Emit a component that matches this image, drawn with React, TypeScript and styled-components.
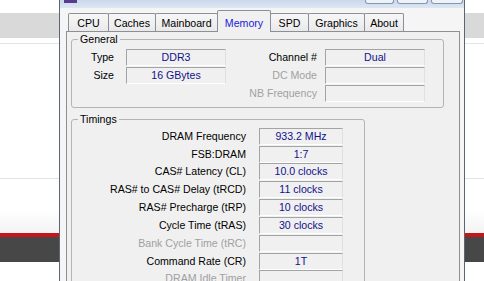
import styled, { createGlobalStyle } from 'styled-components';

const GlobalStyle = createGlobalStyle`
  html, body {
    margin: 0;
    padding: 0;
  }
  body {
    width: 484px;
    height: 281px;
    overflow: hidden;
    background: #fff;
    font-family: "Liberation Sans", Arial, sans-serif;
    font-size: 10.6px;
  }
`;

type Timing = { label: string, value: string, dim?: boolean };

const timings: Timing[] = [
  { label: 'DRAM Frequency', value: '933.2 MHz' },
  { label: 'FSB:DRAM', value: '1:7' },
  { label: 'CAS# Latency (CL)', value: '10.0 clocks' },
  { label: 'RAS# to CAS# Delay (tRCD)', value: '11 clocks' },
  { label: 'RAS# Precharge (tRP)', value: '10 clocks' },
  { label: 'Cycle Time (tRAS)', value: '30 clocks' },
  { label: 'Bank Cycle Time (tRC)', value: '', dim: true },
  { label: 'Command Rate (CR)', value: '1T' },
  { label: 'DRAM Idle Timer', value: '', dim: true },
];

const tabs = [
  { name: 'CPU', w: 41 },
  { name: 'Caches', w: 48 },
  { name: 'Mainboard', w: 63 },
  { name: 'Memory', w: 54, active: true },
  { name: 'SPD', w: 39 },
  { name: 'Graphics', w: 57 },
  { name: 'About', w: 40 },
];

export default function App() {
  return (
    <>
      <GlobalStyle />
      <Page>
        <Band $h={13} $bg="#ffffff" />
        <Band $h={25} $bg="#d9d9d9" />
        <Band $h={5} $bg="#ffffff" />
        <Band $h={1} $bg="#e4e4e4" />
        <Band $h={134} $bg="#ffffff" />
        <Band $h={1} $bg="#e2e2e2" />
        <Band $h={31} $bg="#ffffff" />
        <Band $h={23} $bg="linear-gradient(#ffffff, #f3f3f3)" />
        <Band $h={4} $bg="#c3171c" />
        <Band $h={25} $bg="#474747" />
        <Band $h={19} $bg="#ffffff" />

        <Window>
          <TitleBar>
            <AppIcon />
            <WinButtons>
              <WinButton $w={29} />
              <WinButton $w={31} />
              <WinButton $w={32} />
            </WinButtons>
          </TitleBar>
          <Client>
            <TabRow>
              {tabs.map(t => (
                <Tab key={t.name} $w={t.w} $active={t.active}>{t.name}</Tab>
              ))}
            </TabRow>
            <Panel>
              <Group $w={373}>
                <Legend>General</Legend>
                <GeneralGrid>
                  <Label $pad={12}>Type</Label>
                  <Field>DDR3</Field>
                  <Label $pad={8}>Channel #</Label>
                  <Field>Dual</Field>

                  <Label $pad={12}>Size</Label>
                  <Field>16 GBytes</Field>
                  <Label $pad={8} $dim>DC Mode</Label>
                  <Field />

                  <Label $pad={12} />
                  <span />
                  <Label $pad={8} $dim>NB Frequency</Label>
                  <Field />
                </GeneralGrid>
              </Group>

              <Group $w={294} $top={5}>
                <Legend>Timings</Legend>
                <TimingGrid>
                  {timings.map(t => (
                    <Row key={t.label}>
                      <Label $pad={13} $dim={t.dim}>{t.label}</Label>
                      <Field>{t.value}</Field>
                    </Row>
                  ))}
                </TimingGrid>
              </Group>
            </Panel>
          </Client>
        </Window>
      </Page>
    </>
  );
}

const Page = styled.div`
  position: relative;
  width: 484px;
  height: 281px;
  overflow: hidden;
  display: flex;
  flex-direction: column;
`;

const Band = styled.div<{ $h: number, $bg: string }>`
  flex: none;
  height: ${p => p.$h}px;
  background: ${p => p.$bg};
`;

const Window = styled.div`
  position: absolute;
  left: 59px;
  top: 0;
  width: 406px;
  height: 300px;
  box-sizing: border-box;
  border-left: 1px solid #5b6573;
  border-right: 1px solid #5b6573;
  background: #f5f5f5;
  display: flex;
  flex-direction: column;
`;

const TitleBar = styled.div`
  flex: none;
  height: 8px;
  display: flex;
  align-items: flex-start;
  justify-content: space-between;
  padding: 0 1px 0 4px;
  background: linear-gradient(#cad8ea, #dde7f3);
`;

const AppIcon = styled.div`
  width: 13px;
  height: 3px;
  background: #5b3a91;
`;

const WinButtons = styled.div`
  display: flex;
  gap: 3px;
`;

const WinButton = styled.div<{ $w: number }>`
  width: ${p => p.$w}px;
  height: 4px;
  box-sizing: border-box;
  border: 1px solid #8797ab;
  border-top: 0;
  border-radius: 0 0 3px 3px;
  background: #eef3f9;
`;

const Client = styled.div`
  flex: 1;
  display: flex;
  flex-direction: column;
  padding: 2px 4px 0 6px;
`;

const TabRow = styled.div`
  flex: none;
  height: 21px;
  display: flex;
  align-items: flex-start;
  padding-left: 2px;
`;

const Tab = styled.div<{ $w: number, $active?: boolean }>`
  position: relative;
  z-index: ${p => (p.$active ? 1 : 0)};
  box-sizing: border-box;
  width: ${p => p.$w}px;
  height: ${p => (p.$active ? 22 : 18)}px;
  margin-top: ${p => (p.$active ? 0 : 3)}px;
  margin-left: -1px;
  padding-top: ${p => (p.$active ? 2 : 0)}px;
  border: 1px solid #8c8f96;
  border-bottom: none;
  border-radius: 2px 2px 0 0;
  background: ${p => (p.$active ? '#f0f0f0' : 'linear-gradient(#f7f7f7, #e9e9e9)')};
  color: ${p => (p.$active ? '#1a1ad6' : '#000')};
  display: flex;
  align-items: center;
  justify-content: center;
  white-space: nowrap;

  &:first-child {
    margin-left: 0;
  }
`;

const Panel = styled.div`
  flex: 1;
  border: 1px solid #8c8f96;
  border-bottom: none;
  background: #f0f0f0;
  padding: 1px 0 0 4px;
  display: flex;
  flex-direction: column;
  align-items: flex-start;
`;

const Group = styled.fieldset<{ $w: number, $top?: number }>`
  margin: ${p => p.$top ?? 0}px 0 0 0;
  width: ${p => p.$w}px;
  min-width: 0;
  box-sizing: border-box;
  padding: 3px 0 5px 0;
  border: 1px solid #b4b4b4;
  border-radius: 3px;
`;

const Legend = styled.legend`
  margin-left: 6px;
  padding: 0 2px;
  line-height: 13px;
  color: #000;
`;

const GeneralGrid = styled.div`
  display: grid;
  grid-template-columns: 54px 100px 99px 100px;
  grid-auto-rows: 17px;
  row-gap: 0.85px;
`;

const TimingGrid = styled.div`
  display: flex;
  flex-direction: column;
  gap: 0.85px;
  margin-top: -1px;
`;

const Row = styled.div`
  display: grid;
  grid-template-columns: 187px 84px;
  height: 17px;
`;

const Label = styled.span<{ $pad: number, $dim?: boolean }>`
  text-align: right;
  padding-right: ${p => p.$pad}px;
  line-height: 17px;
  white-space: nowrap;
  color: ${p => (p.$dim ? '#a0a0a0' : '#000')};
`;

const Field = styled.div`
  box-sizing: border-box;
  height: 17px;
  border: 1px solid;
  border-color: #a3a3a3 #e0e0e0 #ffffff #a3a3a3;
  background: #f0f0f0;
  color: #10108a;
  text-align: center;
  line-height: 15px;
  white-space: nowrap;
`;
